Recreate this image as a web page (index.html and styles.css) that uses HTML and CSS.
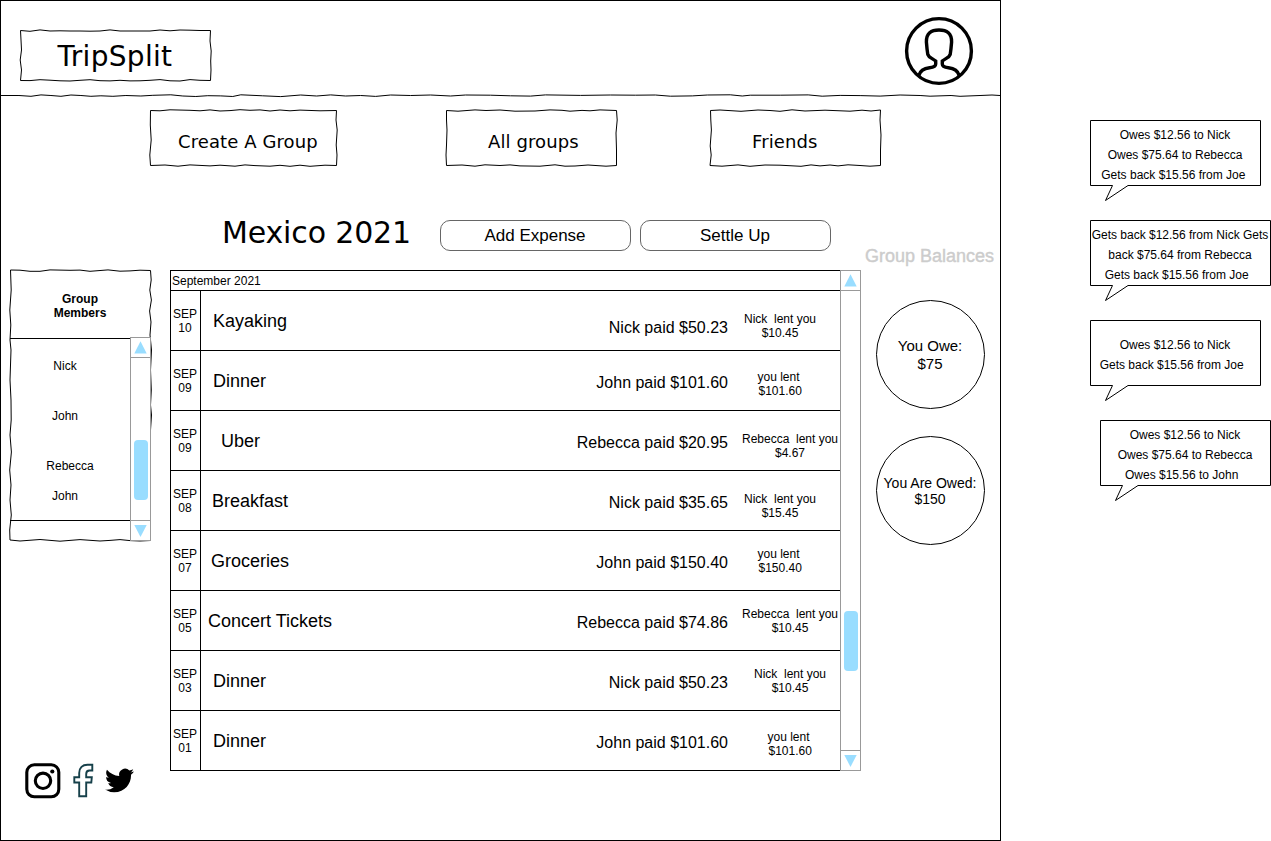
FILE: index.html
```html
<!DOCTYPE html>
<html lang="en">
<head>
<meta charset="utf-8">
<title>TripSplit</title>
<link rel="stylesheet" href="styles.css">
</head>
<body>
<div class="page">
  <div class="frame">
    <header class="header">
      <div class="sketch logo">
        <svg class="outline" viewBox="20 29 193 54" width="193" height="54"><path d="M20.5 30.5L30 31.3L40 29.9L50 31L60 30.8L70 31L80 31L90 31.2L100 31L110 29.9L120 31L130 31L140 31L150 31L160 30L170 30.8L180 30L190 30.2L200 30.5L210.500 30.500L210 41L211.200 51L210.700 61L211 70L210.500 80.500L200 80.300L190 79.600L180 81L170 80.800L160 79.600L150 80.300L140 80.800L130 80.900L120 80.300L110 80.900L100 80.700L90 79.700L80 80.300L70 81L60 80.800L50 80.200L40 79.700L30 80.600L20.500 80.500L21.500 70L20.200 60L21.500 50L21 40Z"/></svg>
        <h1 class="logo-text">TripSplit</h1>
      </div>
      <svg class="avatar" viewBox="0 0 70 70" width="70" height="70"><circle cx="35" cy="35" r="32.400"/><path d="M14.800 59.500C16.200 54.500 20 52.200 25.500 51.700C30 51.400 31.700 50.500 31.700 48V45C28.500 42.300 24.600 41.500 23.800 38.500C23 34 22.700 30 22.400 26C22.200 17.500 27 14 35 14C43 14 47.800 17.500 47.600 26C47.300 30 47 34 46.200 38.500C45.400 41.500 41.500 42.300 38.300 45V48C38.300 50.500 40 51.400 44.500 51.700C50 52.200 53.800 54.500 55.200 59.500"/></svg>
    </header>
    <svg class="divider" viewBox="0 94 1000 4" width="999" height="4"><path d="M0 95.500L18 95.500L30 96.300L40 94.900L50 95.500L60 96.300L70 95L80 95.500L90 96.300L100 95.800L112 96.300L125 95.500L140 96L152 95.300L170 94.800L182 96L195 96.500L207 95.700L220 95.900L232 96.500L240 94.800L262 95.800L280 96.600L300 95L316 96L330 94.900L345 96L360 95.500L375 96.400L390 95L410 95.500L430 95L450 96L465 95L490 95.200L510 95.800L530 96.100L545 94.900L580 95.400L610 95L635 95.200L655 95L670 96.200L692 95.900L707 95L730 94.800L742 96L750 95.200L780 95.200L808 94.900L822 96.200L840 95.400L860 95.600L880 96.100L900 95L920 95.500L930 96.200L951 95.500L960 96.300L980 95.500L992 95L1000 95.500"/></svg>

    <nav class="nav">
      <a class="sketch nav-item nav-create">
        <svg class="outline" viewBox="149 109 190 58" width="190" height="58"><path d="M150.500 110.500L160 110.800L170 109.800L190 110.300L200 110.800L210 109.900L220 111L230 110.600L240 109.700L250 110.300L260 109.900L270 111L280 110L290 110.800L300 110.100L320 110.800L336.500 110.500L336 120L337.200 130L336.200 145L337 155L336.500 165.500L325 165.200L310 166.300L300 165.200L290 166.300L280 165.300L270 166.200L255 165.600L245 164.900L235 166.200L220 165.200L210 165.900L190 164.900L178 166.200L165 165L150.500 165.500L149.800 155L151.200 140L150.300 125Z"/></svg>
        <span class="nav-text">Create A Group</span>
      </a>
      <a class="sketch nav-item nav-groups">
        <svg class="outline" viewBox="445 109 174 58" width="174" height="58"><path d="M446.500 110.500L458 111.200L475 109.900L486 110.500L500 110L515 111.200L535 111L550 109.900L562 110.300L570 111.200L582 110.400L590 110.800L600 109.900L616.500 110.500L617.200 120L616 133L616.500 150L616.500 165.500L606 166.200L588 165L575 166L565 166.200L555 164.800L540 166.200L520 165.900L510 164.900L500 165.500L485 164.800L475 166.200L462 165L446.500 165.500L446 155L446.500 145L447 130L446.500 120Z"/></svg>
        <span class="nav-text">All groups</span>
      </a>
      <a class="sketch nav-item nav-friends">
        <svg class="outline" viewBox="709 109 173 58" width="173" height="58"><path d="M710.500 110.500L720 110L741 111.300L758 110L770 110.500L780 111.300L792 109.800L805 111L825 110.200L850 111.200L862 110.200L871 111L880.500 110L880 120L881 135L880.500 150L880.500 165.500L870 166.200L860 165.500L848 164.800L838 165.900L830 165L820 165.900L811 164.900L801 166.300L780 165.200L765 165L750 166.300L738 164.900L722 166.200L710 165.500L711.200 155L710.200 146L711.400 130L710.800 120Z"/></svg>
        <span class="nav-text">Friends</span>
      </a>
    </nav>

    <main class="main">
      <aside class="left">
        <section class="sketch members">
          <svg class="outline" viewBox="9 269 144 274" width="144" height="274"><path d="M10.500 270L20 270.200L30 271.300L40 271.300L50 269.900L70 270.300L80 270.100L90 271.300L108 269.900L120 271.200L130 270.900L140 270.200L150.500 270.500L151.200 280L149.800 290L151.400 300L149.600 311L151 322L150 335L151.500 350L150.500 370L151.300 390L150.500 405L151.500 415L150.500 430L150.500 450L150.300 480L150.500 510L150.500 540.500L140 541L130 540.600L120 539.600L110 540.400L100 541L80 539.600L60 541.200L40 539.500L20 541L10 540L9.700 530L11.300 515L10 500L11 485L9.700 470L11.400 452L10 435L11.200 420L11 400L10 380L11 350L10 340L10.800 325L9.800 310L11.200 290Z"/></svg>
          <div class="members-body">
            <h2 class="members-title">Group<br>Members</h2>
            <div class="members-mid">
              <ul class="member-list">
                <li class="member">Nick</li>
                <li class="member">John</li>
                <li class="member member-wide">Rebecca</li>
                <li class="member">John</li>
              </ul>
              <div class="scrollbar">
                <svg class="arrow" viewBox="0 0 19 19"><path d="M9.500 3.300L15.700 15.500H3.300Z"/></svg>
                <div class="track"><div class="thumb"></div></div>
                <svg class="arrow" viewBox="0 0 19 19"><path d="M9.500 15.900L15.700 4H3.300Z"/></svg>
              </div>
            </div>
          </div>
        </section>
        <div class="social">
          <svg class="instagram" viewBox="0 0 36 36" width="36" height="36"><rect x="1.800" y="1.800" width="32" height="32" rx="7.500"/><circle cx="18" cy="17.800" r="7.700"/><circle class="dot" cx="27.300" cy="8.500" r="2.100"/></svg>
          <svg class="facebook" viewBox="0 0 22 36" width="22" height="36"><path d="M6.200 33.300V19.500H1.300V14.300H6.200V10C6.200 4.500 9.500 1.800 14.500 1.800H19.300V7.500H16.500C14 7.500 13.200 8.800 13.200 11V14.300H18.800L18.300 19.500H13.200V33.300Z"/></svg>
          <svg class="twitter" viewBox="0 0 24 24" width="29" height="29"><path d="M23.950 4.570a10 10 0 0 1-2.820.770 4.960 4.960 0 0 0 2.160-2.720c-.950.550-2 .960-3.130 1.180a4.920 4.920 0 0 0-8.380 4.480C7.690 8.090 4.070 6.130 1.640 3.160a4.820 4.820 0 0 0-.670 2.480c0 1.710.870 3.210 2.190 4.100a4.900 4.900 0 0 1-2.230-.620v.060a4.920 4.920 0 0 0 3.950 4.830 5 5 0 0 1-2.210.080 4.940 4.940 0 0 0 4.600 3.420A9.870 9.870 0 0 1 0 19.540a13.990 13.990 0 0 0 7.550 2.210c9.050 0 14-7.500 14-13.980 0-.210 0-.420-.020-.630a9.940 9.940 0 0 0 2.460-2.550z"/></svg>
        </div>
      </aside>

      <section class="center">
        <div class="trip-bar">
          <h2 class="trip-title">Mexico 2021</h2>
          <button class="btn">Add Expense</button>
          <button class="btn">Settle Up</button>
        </div>
        <div class="expenses">
          <div class="expense-table">
            <div class="month">September 2021</div>
            <div class="row"><div class="date">SEP<br>10</div><div class="name n1">Kayaking</div><div class="paid p-low">Nick paid $50.23</div><div class="lent l1">Nick  lent you
$10.45</div></div>
            <div class="row"><div class="date">SEP<br>09</div><div class="name n1">Dinner</div><div class="paid">John paid $101.60</div><div class="lent l2">you lent
 $101.60</div></div>
            <div class="row"><div class="date">SEP<br>09</div><div class="name n3">Uber</div><div class="paid">Rebecca paid $20.95</div><div class="lent l3">Rebecca  lent you
$4.67</div></div>
            <div class="row"><div class="date">SEP<br>08</div><div class="name n4">Breakfast</div><div class="paid">Nick paid $35.65</div><div class="lent l1">Nick  lent you
$15.45</div></div>
            <div class="row"><div class="date">SEP<br>07</div><div class="name n5">Groceries</div><div class="paid">John paid $150.40</div><div class="lent l5">you lent
 $150.40</div></div>
            <div class="row"><div class="date">SEP<br>05</div><div class="name n6">Concert Tickets</div><div class="paid">Rebecca paid $74.86</div><div class="lent l6">Rebecca  lent you
$10.45</div></div>
            <div class="row"><div class="date">SEP<br>03</div><div class="name n1">Dinner</div><div class="paid">Nick paid $50.23</div><div class="lent l6">Nick  lent you
$10.45</div></div>
            <div class="row"><div class="date">SEP<br>01</div><div class="name n1">Dinner</div><div class="paid">John paid $101.60</div><div class="lent l8">you lent
 $101.60</div></div>
          </div>
          <div class="scrollbar scrollbar-main">
            <svg class="arrow" viewBox="0 0 19 19"><path d="M9.500 3.300L15.700 15.500H3.300Z"/></svg>
            <div class="track"><div class="thumb"></div></div>
            <svg class="arrow" viewBox="0 0 19 19"><path d="M9.500 15.900L15.700 4H3.300Z"/></svg>
          </div>
        </div>
      </section>

      <aside class="right">
        <h3 class="balances-title">Group Balances</h3>
        <div class="circle">You Owe:<br>$75</div>
        <div class="circle circle-owed">You Are Owed:<br>$150</div>
      </aside>
    </main>
  </div>

  <div class="notes">
    <div class="note">
      <svg class="outline" viewBox="0 0 171 82" width="171" height="82"><path d="M.5 .5H170.500V65.500H38L15.500 80.500L22.500 65.500H.5Z"/></svg>
      <p class="note-text">Owes $12.56 to Nick
Owes $75.64 to Rebecca
Gets back $15.56 from Joe </p>
    </div>
    <div class="note note-wide">
      <svg class="outline" viewBox="0 0 181 82" width="181" height="82"><path d="M.5 .5H180.500V65.500H38L15.500 80.500L22.500 65.500H.5Z"/></svg>
      <p class="note-text">Gets back $12.56 from Nick Gets
back $75.64 from Rebecca
Gets back $15.56 from Joe  </p>
    </div>
    <div class="note">
      <svg class="outline" viewBox="0 0 171 82" width="171" height="82"><path d="M.5 .5H170.500V65.500H38L15.500 80.500L22.500 65.500H.5Z"/></svg>
      <p class="note-text note-short">Owes $12.56 to Nick
Gets back $15.56 from Joe  </p>
    </div>
    <div class="note note-shift">
      <svg class="outline" viewBox="0 0 171 82" width="171" height="82"><path d="M.5 .5H170.500V65.500H38L15.500 80.500L22.500 65.500H.5Z"/></svg>
      <p class="note-text">Owes $12.56 to Nick
Owes $75.64 to Rebecca
Owes $15.56 to John  </p>
    </div>
  </div>
</div>
</body>
</html>
```
FILE: styles.css
```css
* { box-sizing: border-box; }
body {
  margin: 0;
  background: #fff;
  color: #000;
  font: 12px/14px "Liberation Sans", Arial, sans-serif;
  overflow: hidden;
}
h1, h2, h3, p, ul { margin: 0; padding: 0; font-weight: normal; }
ul { list-style: none; }
svg { display: block; flex: none; }

.page { display: flex; width: 1271px; height: 841px; }
.frame {
  flex: none;
  display: flex;
  flex-direction: column;
  width: 1001px;
  height: 841px;
  border: 1px solid #000;
}

/* Hand-drawn outlines share one grid cell with their content */
.sketch, .note { display: grid; }
.sketch > *, .note > * { grid-area: 1 / 1; }
.outline, .divider { fill: none; stroke: #000; stroke-width: 1; overflow: visible; }

.header {
  display: flex;
  justify-content: space-between;
  align-items: flex-start;
  height: 93px;
  padding: 15px 26px 0 19px;
}
.logo { width: 193px; height: 54px; margin-top: 13px; }
.logo-text {
  height: 54px;
  padding-left: 37.500px;
  font: 28px/56px "DejaVu Sans", Verdana, sans-serif;
  letter-spacing: .3px;
}
.avatar { fill: none; stroke: #000; stroke-width: 3.4; }

.nav { display: flex; padding: 11px 0 0 148px; }
.nav-item { height: 58px; }
.nav-create { width: 190px; }
.nav-groups { margin-left: 106px; width: 174px; }
.nav-friends { margin-left: 90px; width: 173px; }
.nav-text {
  font: 18px/66px "DejaVu Sans", Verdana, sans-serif;
  letter-spacing: .1px;
  padding-left: 29px;
  height: 58px;
  white-space: nowrap;
}
.nav-groups .nav-text, .nav-friends .nav-text { padding-left: 43px; }

.main { display: flex; padding-top: 45px; }
.left { width: 169px; padding: 57px 0 0 8px; }
.members { width: 144px; height: 274px; }
.members-body { padding: 0 2px 0 1px; }
.members-title {
  height: 68px;
  padding: 23px 1px 0 0;
  text-align: center;
  font: bold 12px/14px "Liberation Sans", Arial, sans-serif;
}
.members-mid { display: flex; justify-content: space-between; height: 204px; }
.member-list {
  width: 120px;
  height: 183px;
  margin-top: 1px;
  padding: 20px 10px 0 0;
  border: solid #000;
  border-width: 1px 0;
  text-align: center;
}
.member { margin-bottom: 36px; }
.member-wide { margin-bottom: 16px; padding-left: 10px; }

.scrollbar {
  display: flex;
  flex-direction: column;
  width: 21px;
  height: 204px;
  border: 1px solid #999;
  background: #fff;
}
.arrow { width: 19px; height: 19px; fill: #9df; }
.track {
  flex: 1;
  padding: 82px 2.500px 0;
  border: solid #999;
  border-width: 1px 0;
}
.thumb { width: 14px; height: 60px; border-radius: 4px; background: #9df; }
.scrollbar-main { height: 501px; margin-left: -1px; }
.scrollbar-main .track { padding-top: 319.500px; }

.social { display: flex; align-items: flex-start; padding: 220px 0 0 16px; }
.instagram { fill: none; stroke: #000; stroke-width: 3.1; }
.instagram .dot { fill: #000; stroke: none; }
.facebook { margin-left: 12px; fill: none; stroke: #16404a; stroke-width: 1.9; }
.twitter { margin: 3px 0 0 10px; }

.center { width: 691px; }
.trip-bar { display: flex; height: 58px; padding: 8px 0 0 52px; }
.trip-title {
  width: 218px;
  font: 30px/25px "DejaVu Sans", Verdana, sans-serif;
  letter-spacing: -.15px;
  white-space: nowrap;
}
.btn {
  width: 191px;
  height: 31px;
  margin-right: 9px;
  padding: 0 1px 0 0;
  border: 1px solid #666;
  border-radius: 10px;
  background: #fff;
  color: #000;
  font: 17px/29px "Liberation Sans", Arial, sans-serif;
}
.expenses { display: flex; }
.expense-table { width: 671px; height: 501px; border: 1px solid #000; border-right: 0; }
.month { height: 19px; padding-left: 1px; line-height: 20px; }
.row { display: flex; height: 60px; border-top: 1px solid #000; }
.date { width: 30px; padding: 16px 1px 0 0; border-right: 1px solid #000; text-align: center; }
.name { width: 200px; padding-left: 12px; font-size: 18px; line-height: 60px; }
.paid { width: 327px; font-size: 16px; line-height: 63px; text-align: right; }
.p-low { line-height: 73px; }
.lent { width: 112px; white-space: pre; text-align: center; }
.n3 { padding-left: 20px; }
.n4 { padding-left: 11px; }
.n5 { padding-left: 10px; }
.n6 { padding-left: 7px; }
.l1 { padding: 21px 8px 0 0; }
.l2 { padding: 19px 11px 0 0; }
.l3 { padding: 21px 0 0 12px; }
.l5 { padding: 16px 11px 0 0; }
.l6 { padding: 16px 0 0 12px; }
.l8 { padding: 19px 0 0 9px; }

.right { width: 139px; padding-left: 4px; }
.balances-title {
  height: 88px;
  padding-top: 34px;
  color: #ccc;
  font-size: 18px;
  line-height: 20px;
  white-space: nowrap;
  -webkit-text-stroke: .4px #ccc;
}
.circle {
  display: flex;
  align-items: center;
  justify-content: center;
  width: 109px;
  height: 109px;
  margin: 0 0 27px 11px;
  padding-right: 1px;
  border: 1px solid #000;
  border-radius: 50%;
  text-align: center;
  font-size: 15px;
  line-height: 18px;
}
.circle-owed { font-size: 14px; line-height: 16px; white-space: nowrap; }

.notes { flex: none; width: 270px; padding: 120px 0 0 89px; }
.note { width: 171px; height: 82px; margin-bottom: 18px; }
.note-wide { width: 181px; }
.note-shift { margin-left: 10px; }
.note-text { padding: 5px 1px 0 0; line-height: 20px; text-align: center; white-space: pre; }
.note-short { padding-top: 15px; }
```
